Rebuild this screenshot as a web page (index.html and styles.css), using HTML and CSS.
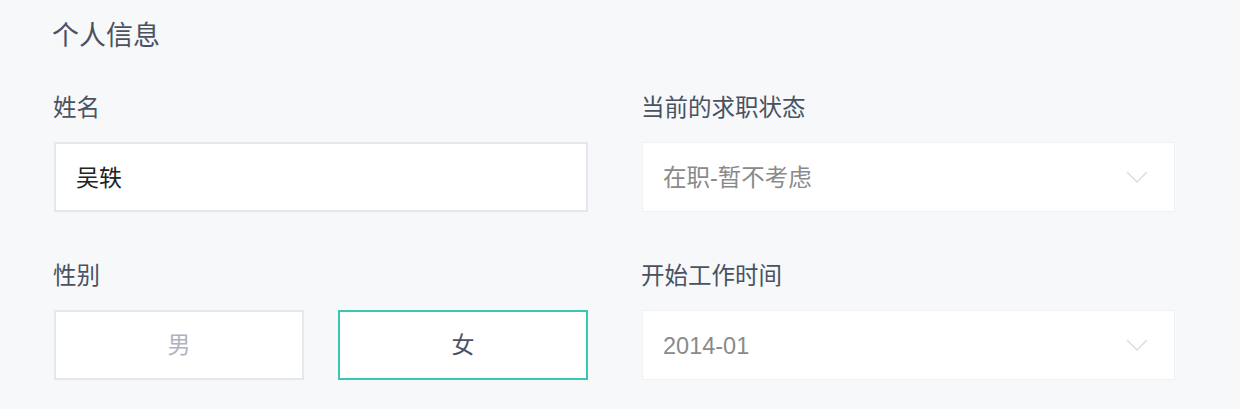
FILE: index.html
```html
<!DOCTYPE html>
<html lang="zh-CN">
<head>
<meta charset="utf-8">
<title>个人信息</title>
<link rel="stylesheet" href="styles.css">
</head>
<body>
<div class="page">
  <h2 class="title">个人信息</h2>
  <div class="form">
    <div class="field">
      <div class="label">姓名</div>
      <div class="input">吴轶</div>
    </div>
    <div class="field">
      <div class="label">当前的求职状态</div>
      <div class="select">
        <span class="value">在职-暂不考虑</span>
        <svg class="chev" width="22" height="12" viewBox="0 0 22 12"><path d="M1 1 L11 11 L21 1" fill="none" stroke="#dcdfe4" stroke-width="1.6"/></svg>
      </div>
    </div>
    <div class="field">
      <div class="label">性别</div>
      <div class="gender">
        <div class="opt">男</div>
        <div class="opt active">女</div>
      </div>
    </div>
    <div class="field">
      <div class="label">开始工作时间</div>
      <div class="select">
        <span class="value num">2014-01</span>
        <svg class="chev" width="22" height="12" viewBox="0 0 22 12"><path d="M1 1 L11 11 L21 1" fill="none" stroke="#dcdfe4" stroke-width="1.6"/></svg>
      </div>
    </div>
  </div>
</div>
</body>
</html>
```

FILE: styles.css
```css
html, body {
  margin: 0;
  padding: 0;
  background: #f7f8fa;
}
body {
  font-family: "Liberation Sans", "Noto Sans CJK SC", sans-serif;
  color: #4a5262;
}
.page {
  padding: 18px 0 0 54px;
  width: 1121px;
}
.title {
  margin: 0;
  font-size: 27px;
  font-weight: 400;
  line-height: 36px;
  color: #4a5262;
  margin-left: -2px;
}
.form {
  display: grid;
  grid-template-columns: 534px 533px;
  column-gap: 54px;
  row-gap: 49px;
  margin-top: 39px;
}
.label {
  font-size: 23.5px;
  line-height: 30px;
  color: #4a5262;
  margin-bottom: 19px;
  margin-left: -1px;
}
.input {
  box-sizing: border-box;
  height: 70px;
  background: #fff;
  border: 2px solid #e4e7ec;
  display: flex;
  align-items: center;
  padding-left: 20px;
  padding-bottom: 3px;
  font-size: 23px;
  color: #222;
}
.select {
  box-sizing: border-box;
  height: 70px;
  background: #fff;
  border: 1px solid #eff1f4;
  display: flex;
  align-items: center;
  justify-content: space-between;
  padding: 0 26px 0 20px;
  font-size: 23.5px;
  color: #8a8a8a;
}
.select .value {
  margin-bottom: 3px;
}
.select .value.num {
  margin-bottom: 0;
  margin-top: 2px;
}
.chev {
  display: block;
}
.gender {
  display: flex;
  gap: 34px;
}
.opt {
  box-sizing: border-box;
  flex: 1;
  height: 70px;
  background: #fff;
  border: 2px solid #e4e7ec;
  display: flex;
  align-items: center;
  justify-content: center;
  padding-bottom: 4px;
  font-size: 23px;
  color: #aeb3bf;
}
.opt.active {
  border-color: #3cc5b3;
  color: #4a5262;
}
```
